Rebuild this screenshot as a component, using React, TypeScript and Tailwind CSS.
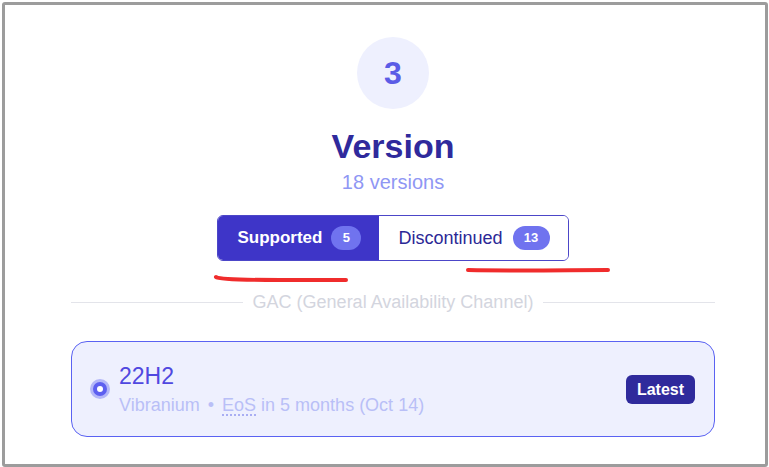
export default function App() {
  return (
    <div
      className="relative h-[467px] w-[769px] overflow-hidden bg-white pl-[2px] pt-[2px]"
      style={{ fontFamily: '"Liberation Sans", Arial, sans-serif' }}
    >
      {/* Frame */}
      <div className="h-[465px] w-[766px] rounded-[3px] border-[3px] border-[#9c9c9c] bg-white">
        <div className="ml-[66px] mr-[50px] flex flex-col items-center pt-[32px]">
          {/* Step circle */}
          <div className="flex h-[72px] w-[72px] items-center justify-center rounded-full bg-[#eef0fe]">
            <span className="text-[32px] font-bold leading-none text-[#5b5ce6]">3</span>
          </div>

          <h1 className="mt-[17px] text-[34px] font-bold leading-[40px] text-[#2f2a9c]">Version</h1>
          <p className="mt-[4px] text-[20px] leading-[24px] text-[#8f97f4]">18 versions</p>

          {/* Tabs */}
          <div className="mt-[21px] flex h-[46px] overflow-hidden rounded-[6px] border border-[#4c46c8]">
            <button className="flex items-center gap-[9px] bg-[#3e35c8] pl-[19px] pr-[18px] text-[17px] font-bold text-white">
              Supported
              <span className="flex h-[24px] w-[30px] items-center justify-center rounded-full bg-[#7073ef] text-[13px] font-bold text-white">
                5
              </span>
            </button>
            <button className="flex items-center gap-[10px] bg-white pl-[19px] pr-[18px] text-[18px] text-[#2b2896]">
              Discontinued
              <span className="flex h-[24px] w-[37px] items-center justify-center rounded-full bg-[#7073ef] text-[13px] font-bold text-white">
                13
              </span>
            </button>
          </div>

          {/* Channel divider */}
          <div className="mt-[31px] flex w-full items-center gap-[10px]">
            <div className="h-px flex-1 bg-[#e3e4ea]" />
            <span className="text-[18px] leading-[20px] text-[#d3d5de]">GAC (General Availability Channel)</span>
            <div className="h-px flex-1 bg-[#e3e4ea]" />
          </div>

          {/* Version card */}
          <div className="mt-[29px] flex h-[96px] w-full items-center rounded-[16px] border-[1.5px] border-[#5a62f2] bg-[#eef0fe] pl-[21px] pr-[19px]">
            <div className="flex h-[14px] w-[14px] items-center justify-center rounded-full bg-[#5d5ff0] ring-[3px] ring-[#b4b7f8]">
              <div className="h-[6px] w-[6px] rounded-full bg-white" />
            </div>
            <div className="ml-[12px] flex flex-1 flex-col">
              <span className="text-[23px] leading-[28px] text-[#5048e0]">22H2</span>
              <span className="mt-[3px] text-[18px] leading-[24px] text-[#b9bff7]">
                Vibranium
                <span className="mx-[8px]">•</span>
                <span className="underline decoration-[#a9aef3] decoration-dotted decoration-[1.5px] underline-offset-[4px]">
                  EoS
                </span>{" "}
                in 5 months (Oct 14)
              </span>
            </div>
            <span className="rounded-[6px] bg-[#2f2a9c] px-[11px] py-[5px] text-[16px] font-bold leading-[19px] text-white">
              Latest
            </span>
          </div>
        </div>
      </div>

      {/* Red annotation strokes */}
      <svg
        className="pointer-events-none absolute left-0 top-0"
        width="769"
        height="467"
        viewBox="0 0 769 467"
        fill="none"
      >
        <path
          d="M216 277 C218 279 240 280 280 280 L346 280"
          stroke="#f02c2c"
          strokeWidth="4"
          strokeLinecap="round"
        />
        <path d="M468 270 C520 271 570 270 608 270" stroke="#f02c2c" strokeWidth="4" strokeLinecap="round" />
      </svg>
    </div>
  );
}
